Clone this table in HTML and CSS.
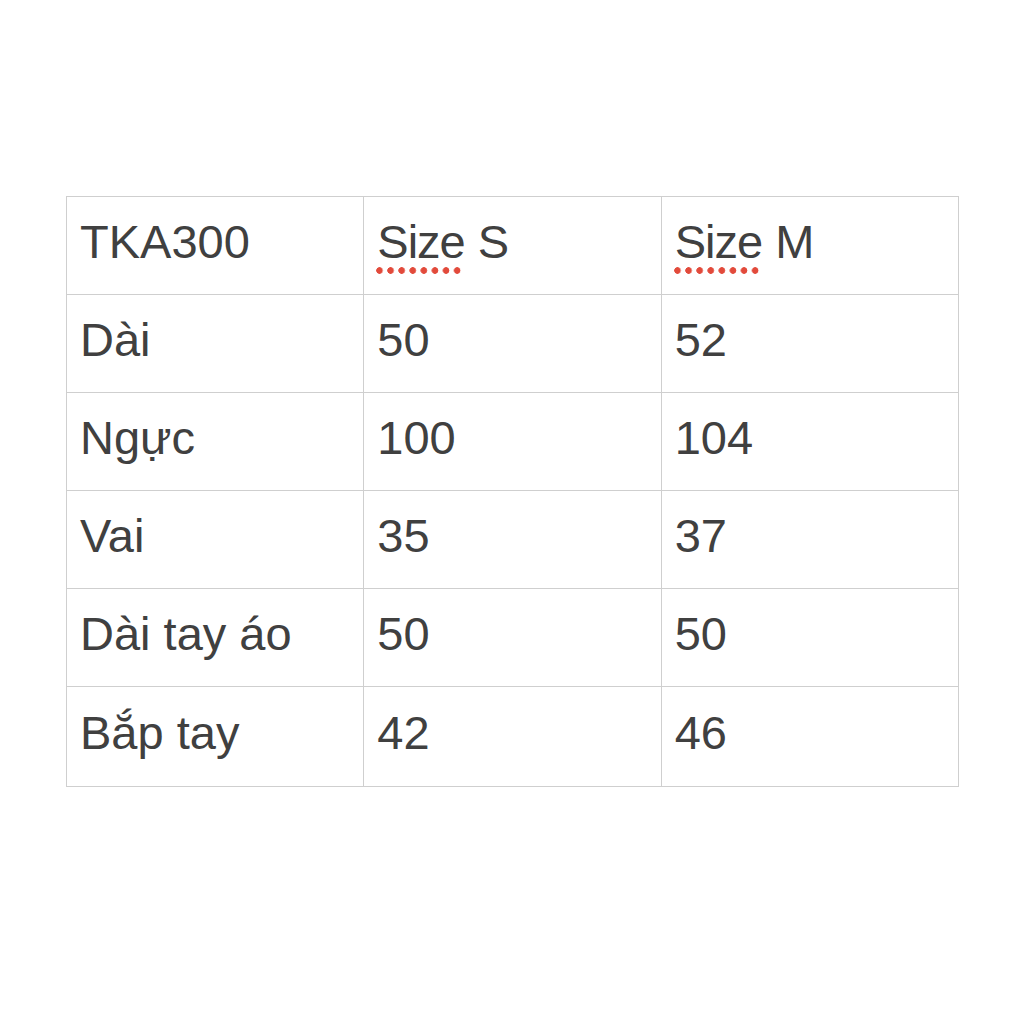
FILE: index.html
```html
<!DOCTYPE html>
<html>
<head>
<meta charset="utf-8">
<link rel="stylesheet" href="styles.css">
</head>
<body>
<table class="size-table">
  <tr><td>TKA300</td><td><span class="spell">Size</span> S</td><td><span class="spell">Size</span> M</td></tr>
  <tr><td>Dài</td><td>50</td><td>52</td></tr>
  <tr><td>Ngực</td><td>100</td><td>104</td></tr>
  <tr><td>Vai</td><td>35</td><td>37</td></tr>
  <tr><td>Dài tay áo</td><td>50</td><td>50</td></tr>
  <tr class="last"><td>Bắp tay</td><td>42</td><td>46</td></tr>
</table>
</body>
</html>
```
FILE: styles.css
```css
html, body {
  margin: 0;
  padding: 0;
  background: #ffffff;
}
body {
  padding-top: 196px;
  padding-left: 66px;
}
.size-table {
  border-collapse: collapse;
  table-layout: fixed;
  width: 893px;
  font-family: "Liberation Sans", Arial, sans-serif;
  font-size: 47px;
  color: #404040;
}
.size-table td {
  border: 1px solid #cfcfcf;
  width: 33.33%;
  height: 98px;
  padding: 0 0 9px 13px;
  vertical-align: middle;
  box-sizing: border-box;
  line-height: 1;
}
.size-table tr.last td {
  height: 100px;
}
.spell {
  position: relative;
  display: inline-block;
  letter-spacing: -1px;
}
.spell::after {
  content: "";
  position: absolute;
  left: -1px;
  top: 100%;
  margin-top: 2px;
  width: 86px;
  height: 7px;
  background-image: radial-gradient(circle at 3.5px 3.5px, #e24a3b 3px, transparent 3.6px);
  background-size: 11.1px 7px;
  background-repeat: repeat-x;
}
```
